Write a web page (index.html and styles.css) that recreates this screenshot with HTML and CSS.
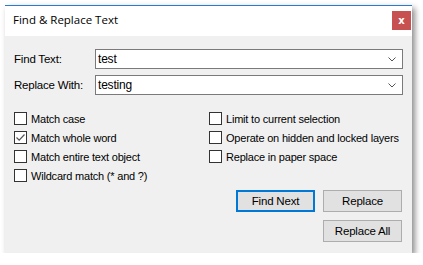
FILE: index.html
```html
<!DOCTYPE html>
<html lang="en">
  <head>
    <meta charset="UTF-8" />
    <title>Find &amp; Replace Text</title>
    <link rel="stylesheet" href="styles.css">
  </head>
  <body>
    <!-- Dialog window -->
    <div class="dialog">
      <div class="title-bar">
        <span class="title">Find &amp; Replace Text</span>
        <button class="close-btn">x</button>
      </div>

      <div class="dialog-body">
        <div class="field-row">
          <label class="field-label">Find Text:</label>
          <div class="combo">
            <span>test</span>
            <svg class="chevron" width="8" height="5" viewBox="0 0 8 5">
              <path d="M0.5 0.5 L4 4 L7.5 0.5" fill="none" stroke="#555" stroke-width="1" />
            </svg>
          </div>
        </div>
        <div class="field-row">
          <label class="field-label">Replace With:</label>
          <div class="combo">
            <span>testing</span>
            <svg class="chevron" width="8" height="5" viewBox="0 0 8 5">
              <path d="M0.5 0.5 L4 4 L7.5 0.5" fill="none" stroke="#555" stroke-width="1" />
            </svg>
          </div>
        </div>

        <div class="options">
          <div class="option-col">
            <div class="check"><span class="box"></span>Match case</div>
            <div class="check">
              <span class="box">
                <svg width="11" height="11" viewBox="0 0 11 11">
                  <path d="M1.5 5.5 L4.2 8.2 L9.5 2.5" fill="none" stroke="#555" stroke-width="1.2" />
                </svg>
              </span>Match whole word
            </div>
            <div class="check"><span class="box"></span>Match entire text object</div>
            <div class="check"><span class="box"></span>Wildcard match (* and ?)</div>
          </div>
          <div class="option-col">
            <div class="check"><span class="box"></span>Limit to current selection</div>
            <div class="check"><span class="box"></span>Operate on hidden and locked layers</div>
            <div class="check"><span class="box"></span>Replace in paper space</div>
          </div>
        </div>

        <div class="buttons">
          <div class="btn-row">
            <button class="btn default">Find Next</button>
            <button class="btn">Replace</button>
          </div>
          <div class="btn-row">
            <button class="btn">Replace All</button>
          </div>
        </div>
      </div>
    </div>
  </body>
</html>
```

FILE: styles.css
```css
body {
  margin: 0;
  padding: 5px 0 0 5px;
  background-color: #ffffff;
  font-family: "Liberation Sans", Arial, sans-serif;
  font-size: 11px;
  letter-spacing: -0.2px;
  color: #000;
}
/* Dialog window */
.dialog {
  width: 407px;
  height: 248px;
  box-sizing: border-box;
  background-color: #f0f0f0;
  border-top: 1px solid #2b79d0;
  box-shadow: 3px 3px 6px rgba(0, 0, 0, 0.45);
  display: flex;
  flex-direction: column;
}
.title-bar {
  height: 30px;
  background-color: #ffffff;
  display: flex;
  align-items: center;
  justify-content: space-between;
}
.title {
  font-family: "Open Sans", "Noto Sans", sans-serif;
  font-size: 11.5px;
  letter-spacing: 0;
  margin-left: 8px;
  margin-top: -3px;
}
.close-btn {
  width: 19px;
  height: 19px;
  margin-right: 1px;
  margin-top: -2px;
  border: none;
  background-color: #c75050;
  color: white;
  font-family: "DejaVu Sans", sans-serif;
  font-weight: bold;
  font-size: 10px;
  padding: 0;
  line-height: 17px;
}
.dialog-body {
  padding: 13px 9px 0 9px;
  display: flex;
  flex-direction: column;
}
.field-row {
  display: flex;
  align-items: center;
  height: 20px;
  margin-bottom: 6px;
  font-size: 11.5px;
}
.field-label {
  width: 81px;
}
.combo {
  width: 308px;
  height: 20px;
  box-sizing: border-box;
  border: 1px solid #7a7a7a;
  background-color: white;
  display: flex;
  align-items: center;
  justify-content: space-between;
  padding: 0 6px 0 2px;
  font-size: 12px;
}
/* Checkboxes */
.options {
  display: flex;
  margin-top: 11px;
}
.option-col {
  display: flex;
  flex-direction: column;
  gap: 6px;
  white-space: nowrap;
}
.option-col:first-child {
  width: 195px;
  flex-shrink: 0;
}
.check {
  display: flex;
  align-items: center;
  height: 13px;
}
.box {
  width: 13px;
  height: 13px;
  box-sizing: border-box;
  border: 1px solid #333;
  background-color: white;
  margin-right: 4px;
  display: flex;
  align-items: center;
  justify-content: center;
}
/* Buttons */
.buttons {
  display: flex;
  flex-direction: column;
  align-items: flex-end;
  gap: 8px;
  margin-top: 8px;
  padding-right: 1px;
}
.btn-row {
  display: flex;
  gap: 8px;
}
.btn {
  width: 79px;
  height: 22px;
  box-sizing: border-box;
  border: 1px solid #adadad;
  background-color: #e1e1e1;
  font-family: "Liberation Sans", Arial, sans-serif;
  font-size: 11.5px;
  letter-spacing: -0.2px;
  padding: 0;
}
.btn.default {
  border: 2px solid #0078d7;
}
```
